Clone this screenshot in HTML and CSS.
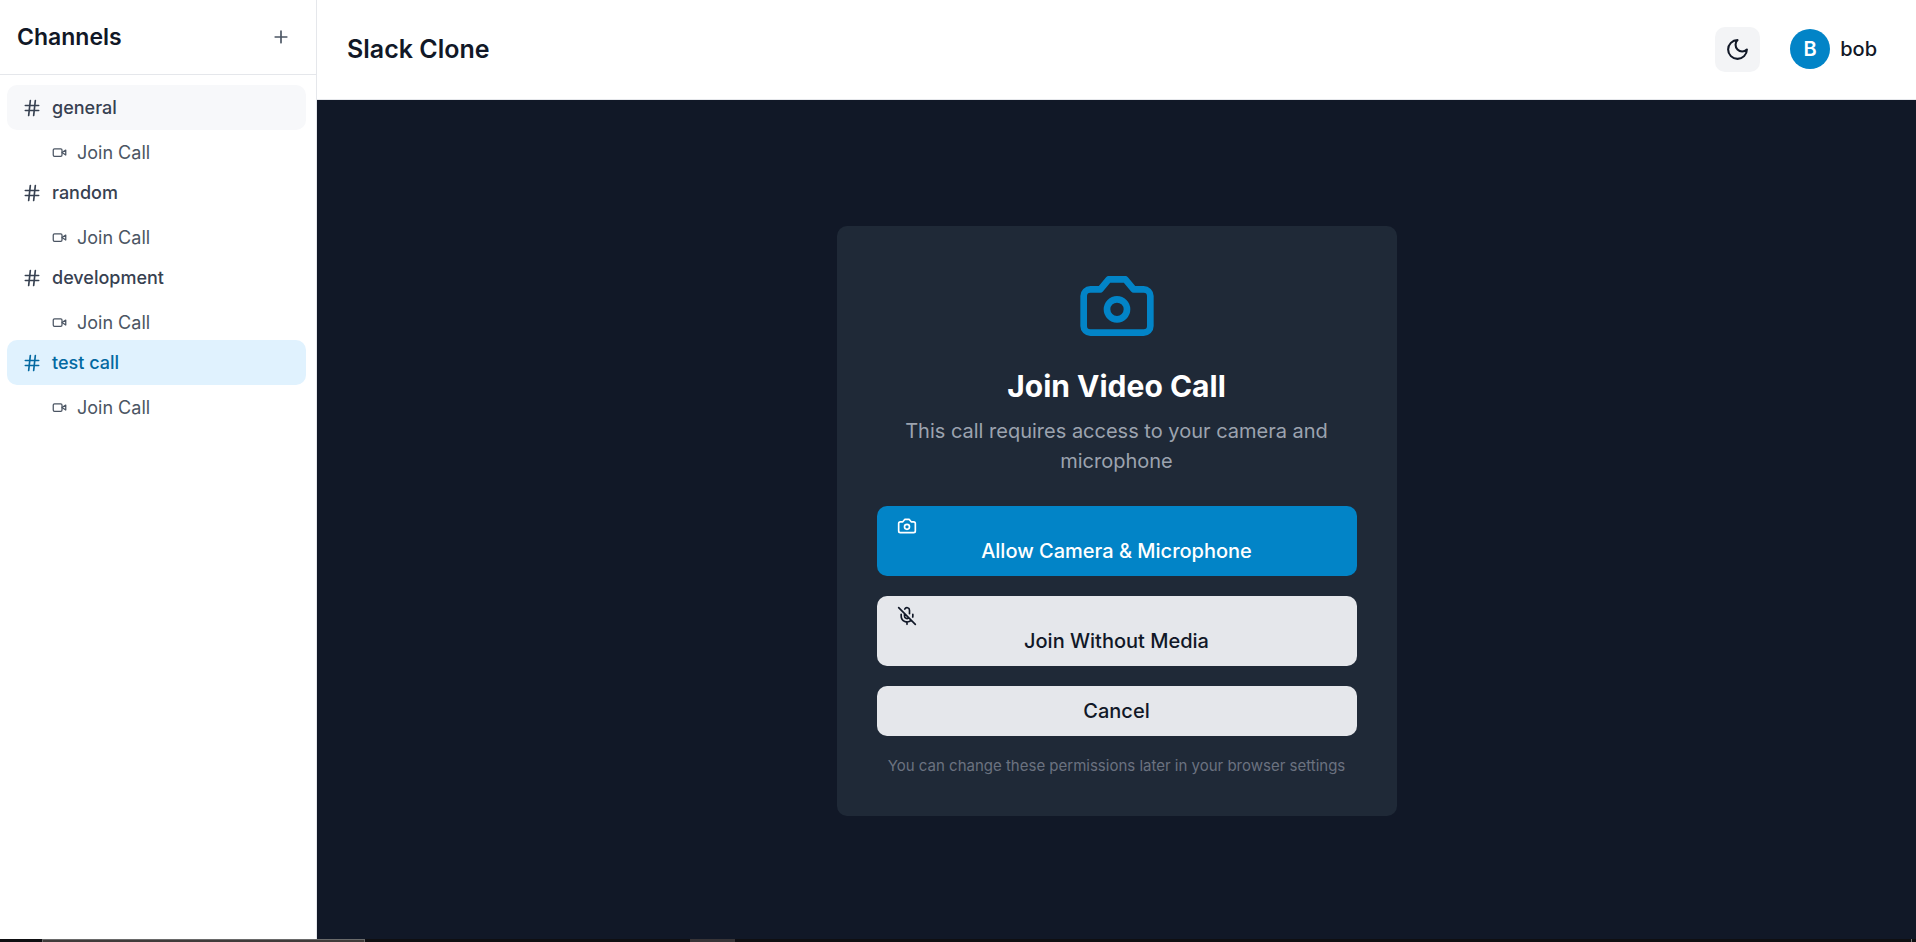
FILE: index.html
```html
<!DOCTYPE html>
<html lang="en">
<head>
<meta charset="utf-8">
<title>Slack Clone</title>
<link rel="stylesheet" href="styles.css">
</head>
<body>
<svg class="sprite" aria-hidden="true">
  <symbol id="hash" viewBox="0 0 24 24"><path d="M4 9h16M4 15h16M10 3 8 21M16 3l-2 18"/></symbol>
  <symbol id="video" viewBox="0 0 24 24"><path d="m22 8-6 4 6 4V8Z"/><rect x="2" y="6" width="14" height="12" rx="2"/></symbol>
  <symbol id="camera" viewBox="0 0 24 24"><path d="M14.5 4h-5L7 7H4a2 2 0 0 0-2 2v9a2 2 0 0 0 2 2h16a2 2 0 0 0 2-2V9a2 2 0 0 0-2-2h-3l-2.500-3z"/><circle cx="12" cy="13" r="3"/></symbol>
</svg>
<div class="app">
  <aside class="sidebar">
    <div class="sidebar-head">
      <h2 class="sidebar-title">Channels</h2>
      <button class="add" type="button" aria-label="Add channel"><svg class="icon" viewBox="0 0 24 24"><path d="M5 12h14M12 5v14"/></svg></button>
    </div>
    <nav class="channels" aria-label="Channels">
      <button class="channel hovered" type="button"><svg class="icon"><use href="#hash"/></svg>general</button>
      <button class="join" type="button"><svg class="icon-small"><use href="#video"/></svg>Join Call</button>
      <button class="channel" type="button"><svg class="icon"><use href="#hash"/></svg>random</button>
      <button class="join" type="button"><svg class="icon-small"><use href="#video"/></svg>Join Call</button>
      <button class="channel" type="button"><svg class="icon"><use href="#hash"/></svg>development</button>
      <button class="join" type="button"><svg class="icon-small"><use href="#video"/></svg>Join Call</button>
      <button class="channel active" type="button"><svg class="icon"><use href="#hash"/></svg>test call</button>
      <button class="join" type="button"><svg class="icon-small"><use href="#video"/></svg>Join Call</button>
    </nav>
  </aside>
  <div class="content">
    <header class="topbar">
      <h1 class="brand">Slack Clone</h1>
      <div class="actions">
        <button class="theme" type="button" aria-label="Toggle dark mode"><svg class="icon-medium" viewBox="0 0 24 24"><path d="M12 3a6 6 0 0 0 9 9 9 9 0 1 1-9-9Z"/></svg></button>
        <button class="user" type="button"><span class="avatar">B</span>bob</button>
      </div>
    </header>
    <main class="stage">
      <section class="card">
        <svg class="icon-large"><use href="#camera"/></svg>
        <h2 class="card-title">Join Video Call</h2>
        <p class="card-text">This call requires access to your camera and microphone</p>
        <div class="choices">
          <button class="choice primary" type="button"><svg class="icon"><use href="#camera"/></svg>Allow Camera &amp; Microphone</button>
          <button class="choice" type="button"><svg class="icon" viewBox="0 0 24 24"><path d="M2 2l20 20M18.890 13.230A7.120 7.120 0 0 0 19 12v-2M5 10v2a7 7 0 0 0 12 5M15 9.340V5a3 3 0 0 0-5.680-1.330M9 9v3a3 3 0 0 0 5.120 2.120M12 19v3"/></svg>Join Without Media</button>
          <button class="choice" type="button">Cancel</button>
        </div>
        <p class="note">You can change these permissions later in your browser settings</p>
      </section>
    </main>
  </div>
</div>
<div class="taskbar"><span class="task-window"></span><span class="task-item"></span><span class="task-edge"></span></div>
</body>
</html>
```
FILE: styles.css
```css
* { box-sizing: border-box; }

body {
  margin: 0;
  font-family: Inter, "Liberation Sans", sans-serif;
  font-size: 20px;
  line-height: 30px;
  color: #111827;
  background: #fff;
}

h1, h2, p { margin: 0; }

button {
  margin: 0;
  padding: 0;
  border: 0;
  background: none;
  color: inherit;
  font: inherit;
  cursor: pointer;
}

svg {
  display: block;
  flex: none;
  fill: none;
  stroke: currentColor;
  stroke-width: 2;
  stroke-linecap: round;
  stroke-linejoin: round;
}

.sprite { position: absolute; width: 0; height: 0; }
.icon { width: 20px; height: 20px; }
.icon-small { width: 15px; height: 15px; }
.icon-medium { width: 25px; height: 25px; }
.icon-large { width: 80px; height: 80px; margin: 0 auto 20px; color: #0284c7; }

.app { display: flex; min-height: 100vh; }

.sidebar { flex: none; width: 317px; border-right: 1px solid #e5e7eb; }
.sidebar-head {
  display: flex;
  align-items: center;
  justify-content: space-between;
  height: 75px;
  padding: 0 20px 0 17px;
  border-bottom: 1px solid #e5e7eb;
}
.sidebar-title { font-size: 23px; font-weight: 600; }
.add { padding: 5px; color: #4b5563; }

.channels { display: flex; flex-direction: column; padding: 10px 10px 10px 7px; }
.channel, .join {
  display: flex;
  align-items: center;
  gap: 10px;
  font-size: 18px;
  line-height: 25px;
  text-align: left;
}
.channel { padding: 10px 15px; border-radius: 10px; color: #374151; font-weight: 500; }
.hovered { background: #f7f8fa; }
.active { background: #e0f2fe; color: #0369a1; }
.join { margin: 5px 0 0 30px; padding: 5px 15px; color: #4b5563; }

.content { flex: 1; display: flex; flex-direction: column; min-width: 0; }
.topbar {
  display: flex;
  align-items: center;
  justify-content: space-between;
  height: 100px;
  padding: 0 29px 1px 30px;
  border-bottom: 1px solid #e5e7eb;
}
.brand { font-size: 25px; font-weight: 600; }
.actions { display: flex; align-items: center; gap: 20px; }
.theme { padding: 10px; border-radius: 10px; background: #f3f4f6; }
.user { display: flex; align-items: center; gap: 10px; padding: 0 10px; font-weight: 500; }
.avatar {
  display: flex;
  align-items: center;
  justify-content: center;
  width: 40px;
  height: 40px;
  border-radius: 50%;
  background: #0284c7;
  color: #fff;
  font-weight: 600;
}

.stage { flex: 1; display: flex; align-items: center; justify-content: center; background: #111827; }
.card {
  width: 560px;
  padding: 40px;
  border-radius: 10px;
  background: #1f2937;
  text-align: center;
}
.card-title { margin-bottom: 10px; font-size: 30px; line-height: 40px; font-weight: 700; color: #fff; }
.card-text { color: #9ca3af; }
.choices { display: flex; flex-direction: column; gap: 20px; margin: 30px 0 20px; }
.choice { padding: 10px 20px; border-radius: 10px; background: #e5e7eb; font-weight: 500; }
.primary { background: #0284c7; color: #fff; }
.note { font-size: 15px; line-height: 20px; color: #6b7280; }

.taskbar { position: fixed; inset: auto 0 0; height: 3px; background: #0f0f12; }
.task-window, .task-item, .task-edge { position: absolute; top: 0; height: 3px; }
.task-window { left: 42px; width: 323px; background: #403c3b; border: 1px solid #6a6a6a; border-bottom: 0; }
.task-item { left: 690px; width: 45px; background: #373437; }
.task-edge { right: 4px; width: 1px; background: #777; }
```
